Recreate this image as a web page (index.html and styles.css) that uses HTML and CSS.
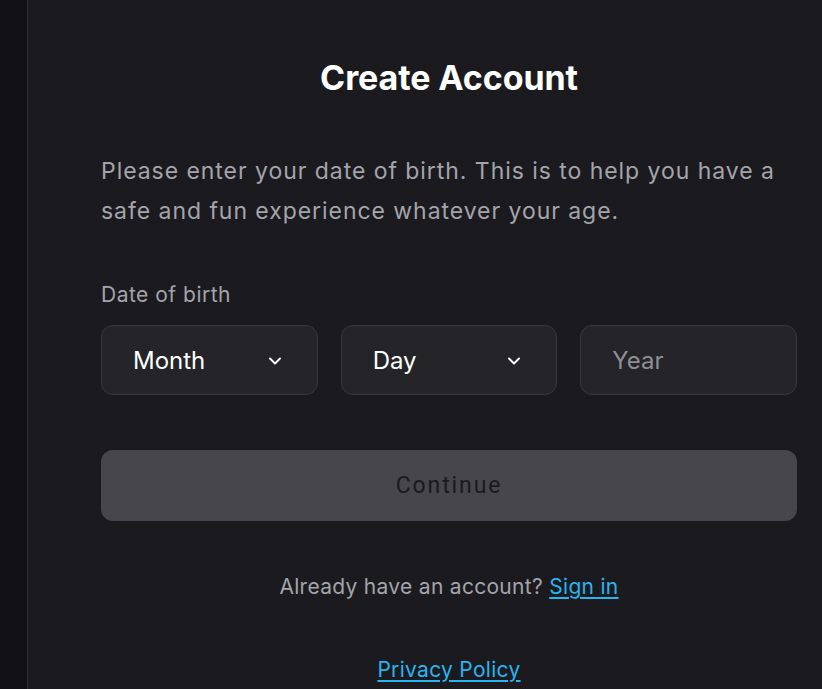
FILE: index.html
```html
<!DOCTYPE html>
<html lang="en">
<head>
    <meta charset="UTF-8">
    <meta name="viewport" content="width=device-width, initial-scale=1.0">
    <title>Create Account</title>
    <link rel="stylesheet" href="styles.css">
</head>
<body>
    <div class="lado"></div>
    <main class="painel">
        <div class="conteudo">
            <h1 class="titulo">Create Account</h1>
            <p class="texto">Please enter your date of birth. This is to help you have a safe and fun experience whatever your age.</p>

            <label class="rotulo">Date of birth</label>
            <div class="campos">
                <div class="campo seletor">
                    <span>Month</span>
                    <svg width="16" height="16" viewBox="0 0 16 16"><path d="M3 5.5 L8 10.5 L13 5.5" fill="none" stroke="#fff" stroke-width="1.9" stroke-linecap="round" stroke-linejoin="round"/></svg>
                </div>
                <div class="campo seletor">
                    <span>Day</span>
                    <svg width="16" height="16" viewBox="0 0 16 16"><path d="M3 5.5 L8 10.5 L13 5.5" fill="none" stroke="#fff" stroke-width="1.9" stroke-linecap="round" stroke-linejoin="round"/></svg>
                </div>
                <div class="campo vazio">
                    <span>Year</span>
                </div>
            </div>

            <button class="botao">Continue</button>

            <p class="entrar">Already have an account? <a href="#">Sign in</a></p>
            <p class="politica"><a href="#">Privacy Policy</a></p>
        </div>
    </main>
</body>
</html>
```

FILE: styles.css
```css
body {
    margin: 0;
    height: 100vh;
    display: flex;
    background-color: #1b1b1f;
    font-family: Inter, "Noto Sans", sans-serif;
    overflow: hidden;
}

.lado {
    width: 27px;
    flex-shrink: 0;
    background-color: #111116;
    border-right: 1px solid #2f2f34;
}

.painel {
    flex: 1;
    padding-left: 73px;
}

.conteudo {
    width: 696px;
}

.titulo {
    margin: 58px 0 0;
    text-align: center;
    color: #ffffff;
    font-size: 34px;
    font-weight: 700;
    letter-spacing: -0.1px;
    line-height: 40px;
}

.texto {
    margin: 53px 0 0;
    color: #a4a4ab;
    font-size: 23px;
    line-height: 40px;
    letter-spacing: 0.95px;
}

.rotulo {
    display: block;
    margin-top: 52px;
    color: #a4a4ab;
    font-size: 21px;
    line-height: 24px;
    letter-spacing: 0.5px;
}

.campos {
    display: flex;
    gap: 23px;
    margin-top: 18px;
}

.campo {
    flex: 1;
    height: 70px;
    box-sizing: border-box;
    display: flex;
    align-items: center;
    justify-content: space-between;
    padding: 0 34px 0 31px;
    border: 1px solid #37373c;
    border-radius: 12px;
    background-color: #242429;
    font-size: 24px;
    color: #ffffff;
}

.campo svg {
    margin-top: 2px;
}

.vazio {
    color: #8e8e95;
}

.botao {
    display: block;
    width: 100%;
    height: 71px;
    margin-top: 55px;
    border: none;
    border-radius: 12px;
    background-color: #47464c;
    color: #1a1a1e;
    font-family: Roboto, sans-serif;
    font-size: 23px;
    letter-spacing: 1.9px;
    cursor: pointer;
}

.entrar {
    margin: 54px 0 0;
    text-align: center;
    color: #a4a4ab;
    font-size: 21px;
    line-height: 24px;
    letter-spacing: 0.3px;
}

.politica {
    margin: 59px 0 0;
    text-align: center;
    font-size: 21px;
    line-height: 24px;
    letter-spacing: 0.3px;
}

a {
    color: #2bb3ef;
    text-decoration: underline;
    text-underline-offset: 3px;
}
```
